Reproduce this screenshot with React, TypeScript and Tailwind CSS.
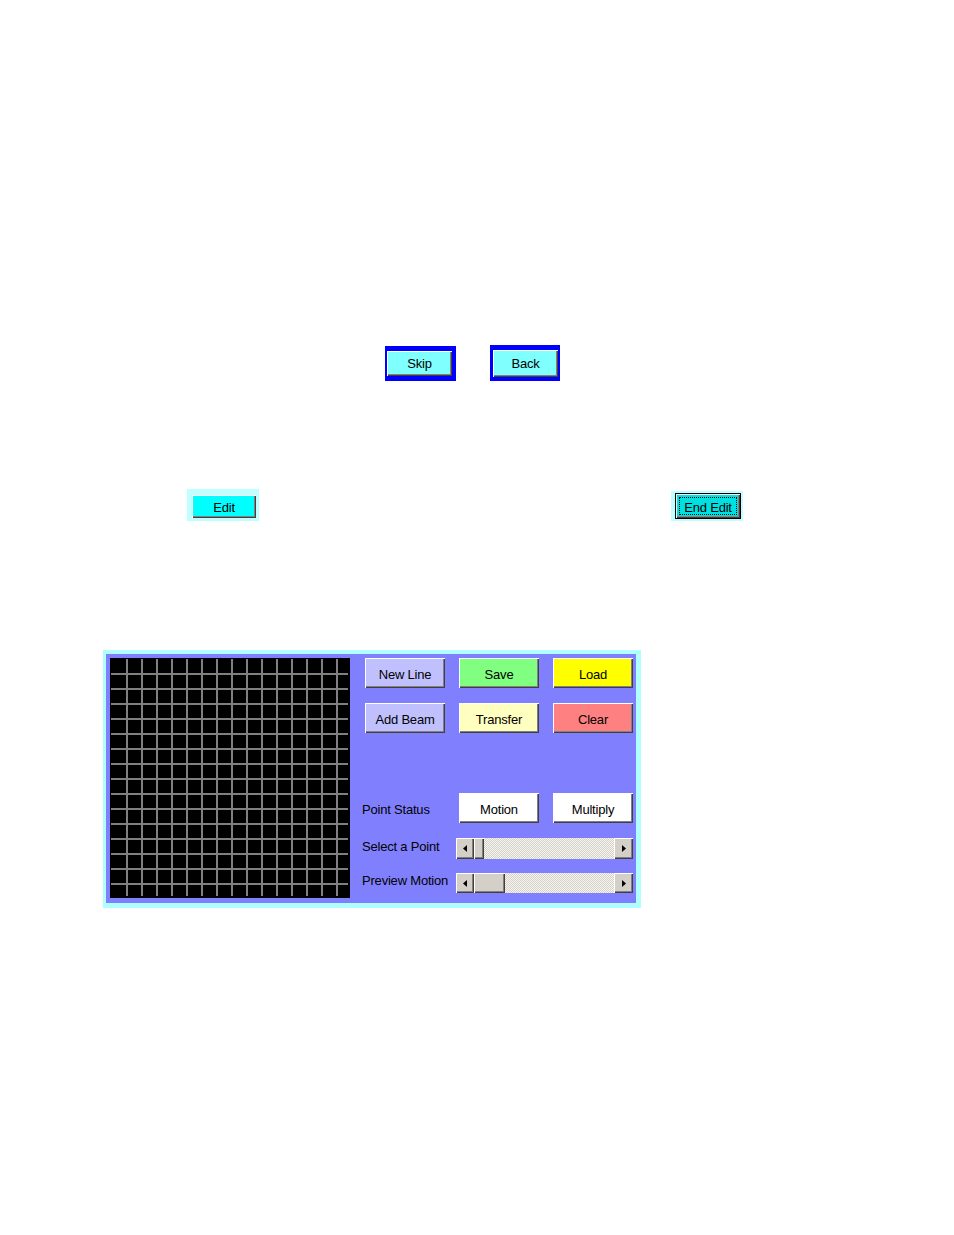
const bevel =
  'shadow-[inset_1px_1px_0_#ffffff,inset_-1px_-1px_0_#404040,inset_-2px_-2px_0_#808080]';

const gridX = Array.from({ length: 15 }, (_, i) => 17 + i * 15);
const gridY = Array.from({ length: 15 }, (_, i) => 16 + i * 15);

function PlotGrid() {
  return (
    <svg width="240" height="240" viewBox="0 0 240 240" className="block shrink-0">
      <rect x="0" y="0" width="240" height="240" fill="#000000" />
      {gridY.map((y) => (
        <line key={`h${y}`} x1="1" y1={y} x2="238" y2={y} stroke="#808080" strokeWidth="2" />
      ))}
      {gridX.map((x) => (
        <line key={`v${x}`} x1={x} y1="1" x2={x} y2="238" stroke="#808080" strokeWidth="2" />
      ))}
    </svg>
  );
}

function Arrow({ dir }: { dir: 'left' | 'right' }) {
  return (
    <svg width="4" height="7" viewBox="0 0 4 7" className="block">
      <polygon points={dir === 'left' ? '4,0 0,3.5 4,7' : '0,0 4,3.5 0,7'} fill="#000000" />
    </svg>
  );
}

function ScrollBar({ thumb, height }: { thumb: number; height: string }) {
  return (
    <div className={`flex w-[177px] ${height}`}>
      <div className={`flex w-[18px] items-center justify-center bg-[#d4d0c8] pr-[1px] ${bevel}`}>
        <Arrow dir="left" />
      </div>
      <div className="flex flex-1 bg-[repeating-conic-gradient(#d4d0c8_0_25%,#f6f6f2_0_50%)] bg-[length:2px_2px]">
        <div className={`h-full bg-[#d4d0c8] ${bevel}`} style={{ width: thumb }} />
      </div>
      <div className={`flex w-[19px] items-center justify-center bg-[#d4d0c8] pl-[1px] ${bevel}`}>
        <Arrow dir="right" />
      </div>
    </div>
  );
}

function PanelButton({ label, color }: { label: string; color: string }) {
  return (
    <div className={`flex h-[30px] w-[80px] items-center justify-center pt-[4px] ${color} ${bevel}`}>
      {label}
    </div>
  );
}

export default function App() {
  return (
    <div className="min-h-[1235px] w-full bg-white pt-[345px] font-['Liberation_Sans',Arial,sans-serif] text-[13px] tracking-[-0.2px] text-black">
      {/* skip / back */}
      <div className="flex items-start pl-[385px]">
        <div className="mt-[1px] h-[35px] w-[71px] bg-[#0000ff] pl-[2px] pt-[5px]">
          <div className={`flex h-[25px] w-[65px] items-center justify-center bg-[#80ffff] ${bevel}`}>
            Skip
          </div>
        </div>
        <div className="ml-[34px] h-[36px] w-[70px] bg-[#0000ff] pl-[3px] pt-[5px]">
          <div className={`flex h-[27px] w-[65px] items-center justify-center bg-[#80ffff] ${bevel}`}>
            Back
          </div>
        </div>
      </div>

      {/* edit / end edit */}
      <div className="mt-[108px] flex items-start pl-[187px]">
        <div className="h-[32px] w-[72px] bg-[#c0ffff] pl-[5px] pt-[6px]">
          <div className={`flex h-[23px] w-[64px] items-center justify-center bg-[#00ffff] pt-[2px] ${bevel}`}>
            Edit
          </div>
        </div>
        <div className="ml-[412px] mt-[2px] h-[30px] w-[72px] bg-[#c0ffff] pl-[4px] pt-[2px]">
          <div className="h-[26px] w-[66px] border border-black">
            <div className={`flex h-full w-full items-center justify-center bg-[#00e0e0] p-[3px] ${bevel}`}>
              <div className="flex h-full w-full items-center justify-center border border-dotted border-black pt-[3px]">
                End Edit
              </div>
            </div>
          </div>
        </div>
      </div>

      {/* motion editor panel */}
      <div className="ml-[103px] mt-[129px] h-[258px] w-[538px] bg-[#b0ffff] pb-[5px] pl-[3px] pr-[5px] pt-[4px]">
        <div className="flex h-full w-full bg-[#8080ff] pl-[4px] pt-[4px]">
          <PlotGrid />
          <div className="ml-[12px] flex flex-col">
            <div className="flex gap-[14px] pl-[3px]">
              <PanelButton label="New Line" color="bg-[#c0c0ff]" />
              <PanelButton label="Save" color="bg-[#80ff80]" />
              <PanelButton label="Load" color="bg-[#ffff00]" />
            </div>
            <div className="mt-[15px] flex gap-[14px] pl-[3px]">
              <PanelButton label="Add Beam" color="bg-[#c0c0ff]" />
              <PanelButton label="Transfer" color="bg-[#ffffc0]" />
              <PanelButton label="Clear" color="bg-[#ff8080]" />
            </div>
            <div className="mt-[60px] flex items-center">
              <span className="w-[97px] pt-[4px]">Point Status</span>
              <PanelButton label="Motion" color="bg-white" />
              <div className="ml-[14px]">
                <PanelButton label="Multiply" color="bg-white" />
              </div>
            </div>
            <div className="mt-[15px] flex h-[21px] items-center">
              <span className="-mt-[4px] w-[94px]">Select a Point</span>
              <ScrollBar thumb={10} height="h-[21px]" />
            </div>
            <div className="mt-[14px] flex h-[20px] items-center">
              <span className="-mt-[4px] w-[94px]">Preview Motion</span>
              <ScrollBar thumb={31} height="h-[20px]" />
            </div>
          </div>
        </div>
      </div>
    </div>
  );
}
